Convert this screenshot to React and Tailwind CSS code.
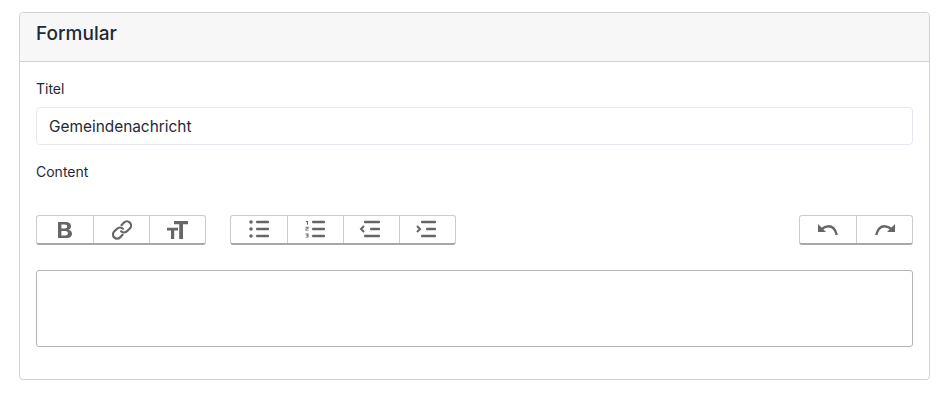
import React from "react";

const ICON = "#666666";

const BoldIcon = () => (
  <svg width="14" height="16" viewBox="0 0 14 16">
    <path
      d="M0 0h7.500C11 0 13 1.500 13 4.200c0 1.700-1 3-2.600 3.500 2.100.3 3.600 1.800 3.600 4 0 2.800-2.200 4.300-5.500 4.300H0z M3.400 2.600v3.900h3.400c1.500 0 2.400-.7 2.400-2 0-1.200-.9-1.900-2.400-1.900z M3.400 9v4.400h3.900c1.700 0 2.600-.8 2.600-2.200S9 9 7.300 9z"
      fill={ICON}
      fillRule="evenodd"
    />
  </svg>
);

const LinkIcon = () => (
  <svg width="26" height="26" viewBox="0 0 20 20" fill="none" stroke={ICON} strokeWidth="1.700" strokeLinecap="round">
    <path d="M9.600 6.300l1.900-2a3.200 3.200 0 0 1 4.500 0 3.200 3.200 0 0 1 0 4.500l-2.200 2.200a3.200 3.200 0 0 1-4.500 0" />
    <path d="M10.400 13.700l-1.900 2a3.200 3.200 0 0 1-4.500 0 3.200 3.200 0 0 1 0-4.500l2.200-2.200a3.200 3.200 0 0 1 4.500 0" />
  </svg>
);

const HeadingIcon = () => (
  <svg width="21" height="18" viewBox="0 0 21 18" fill={ICON}>
    <path d="M7 0h14v3.200h-5v14.800h-3.800V3.200H7z" />
    <path d="M0 6.800h11v2.800H7.200V18H4V9.600H0z" />
  </svg>
);

const Rows = ({ x1, x2 = x1, x3 = x1 }) => (
  <>
    <rect x={x1} y="-0.2" width={20 - x1} height="2.400" rx="1" />
    <rect x={x2} y="6.800" width={20 - x2} height="2.400" rx="1" />
    <rect x={x3} y="13.800" width={20 - x3} height="2.400" rx="1" />
  </>
);

const BulletIcon = () => (
  <svg width="21" height="17" viewBox="0 0 21 17" fill={ICON} overflow="visible">
    <circle cx="2" cy="1" r="1.800" />
    <circle cx="2" cy="8" r="1.800" />
    <circle cx="2" cy="15" r="1.800" />
    <Rows x1={7} />
  </svg>
);

const NumberIcon = () => (
  <svg width="21" height="17" viewBox="0 0 21 17" fill={ICON} overflow="visible">
    <path d="M1 0h2v3.800H2V1H1z" />
    <path d="M.5 5.800h3V8H1.600v.7h1.900v.9h-3V7.400h2v-.7h-2z" />
    <path d="M.5 12.600h3v4h-3v-.8h2V15H1.200v-.7h1.300v-.8h-2z" />
    <Rows x1={7} />
  </svg>
);

const OutdentIcon = () => (
  <svg className="-ml-[2px]" width="21" height="17" viewBox="0 0 21 17" fill={ICON} overflow="visible">
    <Rows x1={4} x2={10} />
    <path d="M4 5L1 8l3 3" fill="none" stroke={ICON} strokeWidth="2" />
  </svg>
);

const IndentIcon = () => (
  <svg className="-ml-[2px]" width="21" height="17" viewBox="0 0 21 17" fill={ICON} overflow="visible">
    <Rows x1={5} x2={10} />
    <path d="M1 5l3 3-3 3" fill="none" stroke={ICON} strokeWidth="2" />
  </svg>
);

const UndoIcon = () => (
  <svg width="20" height="12" viewBox="0 0 20 12" fill="none">
    <path d="M0 0v8h8z" fill={ICON} />
    <path d="M3 5.500c2.500-2.200 5-3.300 7.500-3.300 4 0 7 3.300 8.300 8.800" stroke={ICON} strokeWidth="2.400" />
  </svg>
);

const RedoIcon = () => (
  <svg width="20" height="12" viewBox="0 0 20 12" fill="none">
    <path d="M20 0v8h-8z" fill={ICON} />
    <path d="M17 5.500c-2.500-2.200-5-3.300-7.500-3.300-4 0-7 3.300-8.300 8.800" stroke={ICON} strokeWidth="2.400" />
  </svg>
);

const ToolGroup = ({ items }) => (
  <div className="flex h-[30px] rounded-[3px] border border-[#cccccc] border-b-2 border-b-[#a8a8a8] bg-white">
    {items.map((Icon, i) => (
      <div
        key={i}
        className={`flex h-full w-[56px] items-center justify-center ${i > 0 ? "border-l border-[#cccccc]" : ""}`}
      >
        <Icon />
      </div>
    ))}
  </div>
);

const App = () => {
  return (
    <div className="min-h-[406px] bg-white px-[19px] pt-3 font-['Inter',sans-serif] text-[#1f2937]">
      <div className="h-[368px] rounded-[4px] border border-[#d2d2d2]">
        <div className="flex h-[49px] items-center rounded-t-[4px] border-b border-[#d2d2d2] bg-[#f7f7f7] px-4 pb-[5px]">
          <h2 className="text-[19px] font-medium">Formular</h2>
        </div>
        <div className="px-4 pt-[17px]">
          <label className="block text-sm leading-[20px]">Titel</label>
          <div className="mt-2 flex h-[38px] items-center rounded-[4px] border border-[#e6e8ee] px-3 pt-[2px] text-[15.4px]">
            Gemeindenachricht
          </div>
          <label className="mt-[17px] block text-sm leading-[20px]">Content</label>
          <div className="mt-[33px] flex items-center justify-between">
            <div className="flex gap-[24px]">
              <ToolGroup items={[BoldIcon, LinkIcon, HeadingIcon]} />
              <ToolGroup items={[BulletIcon, NumberIcon, OutdentIcon, IndentIcon]} />
            </div>
            <ToolGroup items={[UndoIcon, RedoIcon]} />
          </div>
          <div className="mt-[25px] h-[77px] rounded-[3px] border border-[#b5b5b5]" />
        </div>
      </div>
    </div>
  );
};

export default App;
